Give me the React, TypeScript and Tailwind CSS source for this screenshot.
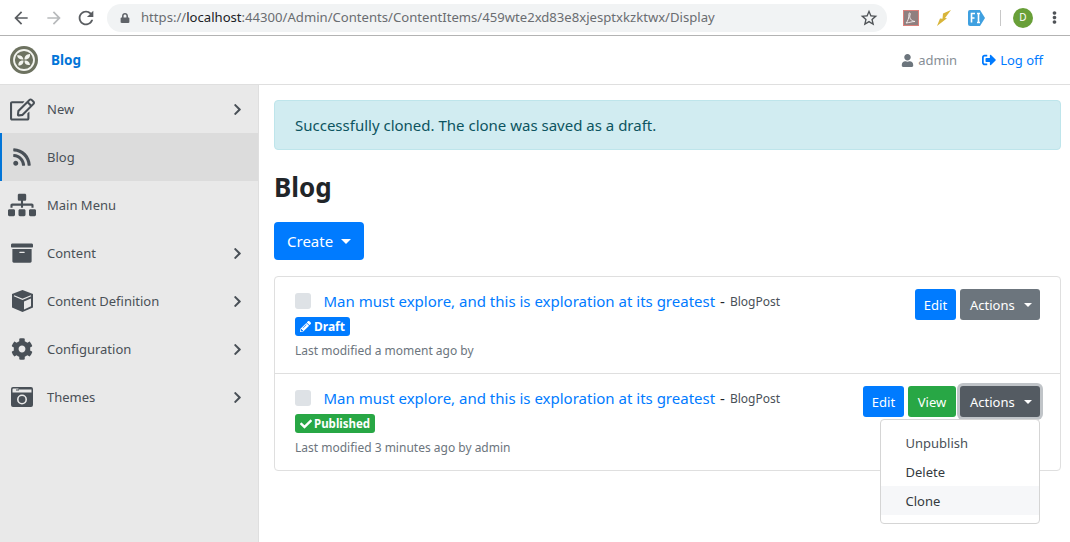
import React from "react";
import { FaRegEdit, FaRss, FaSitemap, FaArchive, FaCog, FaUser, FaSignOutAlt, FaPencilAlt, FaCheck, FaChevronRight, FaLock, FaEllipsisV } from "react-icons/fa";
import { MdRefresh, MdStarBorder, MdArrowBack, MdArrowForward } from "react-icons/md";

const ThemeIcon = () => (
  <svg width="22" height="20" viewBox="0 0 22 20" className="text-[#495057]">
    <path fill="currentColor" fillRule="evenodd" d="M2 0h18a2 2 0 0 1 2 2v16a2 2 0 0 1-2 2H2a2 2 0 0 1-2-2V2a2 2 0 0 1 2-2zM1.500 5.500v-3a1 1 0 0 1 1-1h5v1H5v1h3v-1h12.500v3zM11 7.500a5 5 0 1 0 0 10 5 5 0 0 0 0-10zm0 1.600a3.400 3.400 0 1 1 0 6.800 3.400 3.400 0 0 1 0-6.800z" />
    <path fill="currentColor" d="M10.400 14.200l1.600-3 .7.400-1.600 3z" />
  </svg>
);

const CubeIcon = () => (
  <svg width="23" height="22" viewBox="0 0 23 22">
    <path fill="#495057" d="M11.500 0 22 4v13.500L11.500 22 1 17.500V4z" />
    <path fill="#e9e9e9" d="M13 11.500 20 8.600v7.700L13 19.400z" />
    <path fill="none" stroke="#e9e9e9" strokeWidth="1.200" d="M3 5.800 11.500 9.300 20 5.800" />
  </svg>
);

const Logo = () => (
  <svg width="28" height="28" viewBox="0 0 28 28">
    <circle cx="14" cy="14" r="14" fill="#6d7260" />
    <circle cx="14" cy="14" r="10" fill="none" stroke="#f2f3ee" strokeWidth="1.800" />
    <path fill="#f2f3ee" d="M13.500 13.500C10 13.800 7.600 12.500 7 9.500c3-.8 6 .6 6.500 4zM14.500 13.500c-.2-3 1.600-5.200 5.500-5.500.4 3.200-1.600 5.800-5.500 5.500zM13.500 14.500c.2 3-1.800 5-5 5-.6-3 1.400-5.400 5-5zM14.500 14.500c3.200-.3 5.200 1.400 5.500 4.500-3.200.6-5.800-1-5.500-4.500z" />
  </svg>
);

const menu: { label: string; icon: React.ReactNode; arrow?: boolean; active?: boolean }[] = [
  { label: "New", icon: <FaRegEdit size={25} />, arrow: true },
  { label: "Blog", icon: <FaRss size={20} />, active: true },
  { label: "Main Menu", icon: <FaSitemap size={28} />, },
  { label: "Content", icon: <FaArchive size={22} />, arrow: true },
  { label: "Content Definition", icon: <CubeIcon />, arrow: true },
  { label: "Configuration", icon: <FaCog size={22} />, arrow: true },
  { label: "Themes", icon: <ThemeIcon />, arrow: true },
];

const Btn = ({ className, children }: { className: string; children: React.ReactNode }) => (
  <span className={`inline-flex h-[31px] items-center justify-center rounded-[3px] pt-[2px] text-[13px] text-white ${className}`}>{children}</span>
);

const Caret = () => <span className="ml-auto -mt-[2px] inline-block h-0 w-0 border-x-[4px] border-t-[4px] border-x-transparent border-t-white" />;

const Row = ({ badge, meta, children, last }: { badge: React.ReactNode; meta: string; children: React.ReactNode; last?: boolean }) => (
  <div className={`flex justify-between pl-[20px] pr-[20px] pt-[12px] ${last ? "h-[96px]" : "h-[97px] border-b border-[#dfdfdf]"}`}>
    <div>
      <div className="flex h-[24px] items-center">
        <span className="h-[16px] w-[16px] rounded-[3px] bg-[#dee2e6]" />
        <a className="ml-[12.500px] text-[15px] text-[#007bff]">Man must explore, and this is exploration at its greatest</a>
        <span className="ml-[5px] text-[15px] text-[#212529]">-</span>
        <span className="ml-[5px] mt-[2px] text-[12px] text-[#495057]">BlogPost</span>
      </div>
      <div className="mt-[4px] flex">{badge}</div>
      <div className="mt-[6px] text-[12px] leading-[18px] text-[#6c757d]">{meta}</div>
    </div>
    <div className="flex gap-[4px]">{children}</div>
  </div>
);

export default function App() {
  return (
    <div className="flex h-[542px] w-[1070px] flex-col overflow-hidden bg-white font-['Noto_Sans','Open_Sans',sans-serif] text-[13px] text-[#212529]">
      <div className="flex h-[36px] shrink-0 items-center border-b border-[#b3b3b3] bg-white">
        <MdArrowBack size={20} className="ml-[11px] text-[#5a5d61]" />
        <MdArrowForward size={20} className="ml-[13px] text-[#b8babc]" />
        <MdRefresh size={22} className="ml-[11px] text-[#5a5d61]" />
        <div className="ml-[10px] flex h-[28px] w-[780px] items-center rounded-full bg-[#f1f3f4] pl-[13px] pr-[8px]">
          <FaLock size={10} className="text-[#5f6368]" />
          <span className="ml-[11px] flex-1 text-[13.110px] text-[#6a6d71]">https://<span className="text-[#202124]">localhost</span>:44300/Admin/Contents/ContentItems/459wte2xd83e8xjesptxkzktwx/Display</span>
          <MdStarBorder size={20} className="text-[#4f5357]" />
        </div>
        <svg width="16" height="16" viewBox="0 0 16 16" className="ml-[16px]">
          <rect x="0.500" y="0.500" width="15" height="15" fill="#8f7f7f" stroke="#d9807a" />
          <path fill="none" stroke="#efe9e9" strokeWidth="1" d="M3 13c2-2 3-5 3-9 0-2 2-1 1 1-1 3 1 6 5 6.500-3 0-5 1-9 1.500z" />
        </svg>
        <svg width="15" height="16" viewBox="0 0 15 16" className="ml-[17px]"><path fill="#d8b53a" d="M15 0 9 8l2 .2L1 16l3-7.500 2.500.2L7 3.500z" /></svg>
        <svg width="17" height="16" viewBox="0 0 17 16" className="ml-[17px]"><path fill="#3fa0e0" d="M2 0h10l5 8-5 8H2a2 2 0 0 1-2-2V2a2 2 0 0 1 2-2z" /><path fill="none" stroke="#fff" strokeWidth="1.600" d="M3.500 12.500V3.500H7M3.500 8H6.500M9 3.500h3M9 12.500h3M10.500 3.500v9" /></svg>
        <span className="ml-[15px] h-[16px] w-px bg-[#c8c8c8]" />
        <span className="ml-[12px] flex h-[20px] w-[20px] items-center justify-center rounded-full bg-[#689f38] text-[10px] text-white">D</span>
        <FaEllipsisV size={13} className="ml-[15px] text-[#4f5357]" />
      </div>
      <div className="flex h-[49px] shrink-0 items-center border-b border-[#dfdfdf] pl-[10px] pr-[27px]">
        <Logo />
        <span className="ml-[13px] text-[13.500px] font-bold text-[#0275d8]">Blog</span>
        <div className="ml-auto flex items-center text-[13px]">
          <FaUser size={13} className="text-[#6c757d]" />
          <span className="ml-[4px] mt-[2px] text-[#868e96]">admin</span>
          <FaSignOutAlt size={14} className="ml-[25px] text-[#007bff]" />
          <span className="ml-[4px] mt-[2px] text-[#007bff]">Log off</span>
        </div>
      </div>
      <div className="flex min-h-0 flex-1">
        <aside className="w-[259px] shrink-0 border-r border-[#dfdfdf] bg-[#e9e9e9]">
          {menu.map((m) => (
            <div key={m.label} className={`flex h-[48px] items-center pr-[14px] text-[13px] text-[#495057] ${m.active ? "border-l-2 border-[#0275d8] bg-[#dcdcdc]" : "border-l-2 border-transparent"}`}>
              <span className="mr-[5px] flex w-[40px] shrink-0 justify-center text-[#495057]">{m.icon}</span>
              <span className="mt-[2px]">{m.label}</span>
              {m.arrow && <FaChevronRight size={13} className="ml-auto text-[#495057]" />}
            </div>
          ))}
        </aside>
        <main className="min-w-0 flex-1 pl-[15px] pr-[9px] pt-[15px]">
          <div className="flex h-[50px] items-center rounded-[4px] border border-[#bee5eb] bg-[#d1ecf1] pl-[20px] text-[15px] text-[#0c5460]">Successfully cloned. The clone was saved as a draft.</div>
          <h1 className="mt-[19px] text-[26px] font-bold leading-[36px] text-[#212529]">Blog</h1>
          <div className="mt-[17px] flex">
            <span className="inline-flex h-[38px] w-[90px] items-center rounded-[4px] bg-[#007bff] px-[13px] text-[15px] text-white">Create<span className="ml-auto inline-block h-0 w-0 border-x-[5px] border-t-[5px] border-x-transparent border-t-white" /></span>
          </div>
          <div className="relative mt-[16px] rounded-[4px] border border-[#dfdfdf]">
            <Row
              meta="Last modified a moment ago by"
              badge={<span className="inline-flex h-[19px] items-center rounded-[3px] bg-[#007bff] px-[5px] text-[12px] font-bold text-white"><FaPencilAlt size={11} className="mr-[3px]" />Draft</span>}
            >
              <Btn className="w-[41px] bg-[#007bff]">Edit</Btn>
              <Btn className="w-[80px] bg-[#6c757d] pl-[10px] pr-[8px]">Actions<Caret /></Btn>
            </Row>
            <Row
              last
              meta="Last modified 3 minutes ago by admin"
              badge={<span className="inline-flex h-[19px] items-center rounded-[3px] bg-[#28a745] px-[5px] text-[11.500px] font-bold text-white"><FaCheck size={12} className="mr-[2px]" />Published</span>}
            >
              <Btn className="w-[41px] bg-[#007bff]">Edit</Btn>
              <Btn className="w-[48px] bg-[#28a745]">View</Btn>
              <Btn className="w-[80px] bg-[#545b62] pl-[10px] pr-[8px] shadow-[0_0_0_3px_rgba(130,138,145,0.5)]">Actions<Caret /></Btn>
            </Row>
            <div className="absolute right-[20px] top-[142px] w-[160px] rounded-[4px] border border-[#d5d5d5] bg-white py-[8px] text-[13px]">
              <div className="flex h-[29px] items-center pl-[24.500px] pt-[2px] text-[#495057]">Unpublish</div>
              <div className="flex h-[29px] items-center pl-[24.500px] pt-[2px] text-[#343a40]">Delete</div>
              <div className="flex h-[29px] items-center bg-[#f6f7f9] pl-[24.500px] pt-[2px] text-[#343a40]">Clone</div>
            </div>
          </div>
        </main>
      </div>
    </div>
  );
}
